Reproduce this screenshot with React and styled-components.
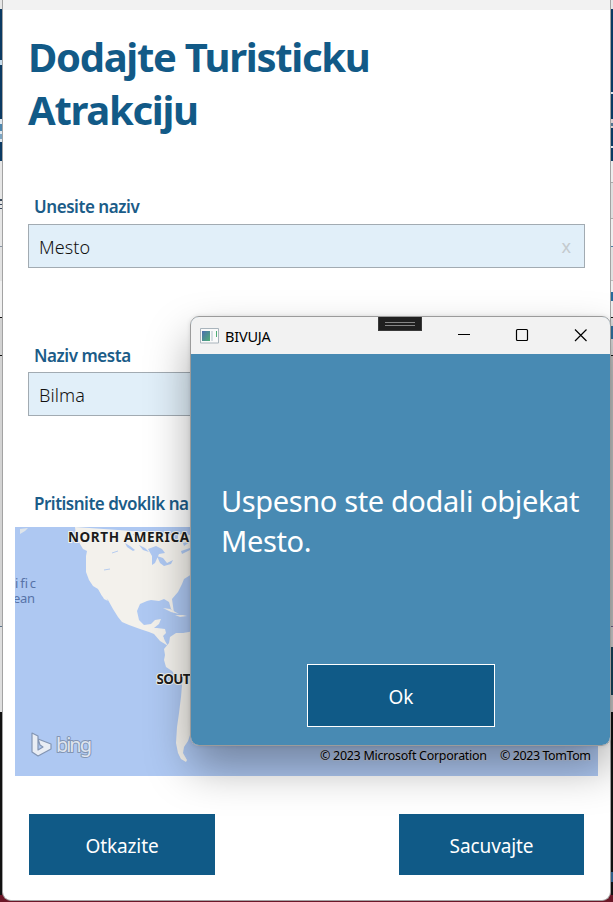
import React from "react";
import styled, { createGlobalStyle } from "styled-components";

const sans = '"Noto Sans", "Open Sans", sans-serif';

const GlobalStyle = createGlobalStyle`
  * { box-sizing: border-box; }
  body { margin: 0; overflow: hidden; background: #6b1727; font-family: ${sans}; }
`;

const Desktop = styled.div`
  position: relative;
  display: grid;
  grid-template-columns: 2px 609px 2px;
  width: 613px;
  height: 902px;
  background: linear-gradient(#e8e8e8 0 890px, #6b1727 890px);
  overflow: hidden;
`;

const Strip = styled.div`
  display: flex;
  flex-direction: column;
`;

const Band = styled.div`
  flex: none;
  height: ${(p) => p.$h}px;
  background: ${(p) => p.$c};
`;

const Window = styled.main`
  height: 901px;
  display: flex;
  flex-direction: column;
  background: #fff;
  border: 1px solid #a3a3a3;
  border-top: 0;
  border-radius: 0 0 9px 9px;
  overflow: hidden;
`;

const WindowTop = styled.div`
  flex: none;
  height: 10px;
  background: #f2f2f2;
`;

const Title = styled.h1`
  margin: 20px 0 0 25px;
  width: 400px;
  color: #125a87;
  font-size: 40px;
  line-height: 53px;
  font-weight: 700;
  letter-spacing: -1.3px;
`;

const Label = styled.label`
  display: block;
  margin: ${(p) => p.$top}px 0 0 31px;
  height: 24px;
  line-height: 24px;
  font-size: 17px;
  font-weight: 600;
  color: #1b5c88;
  letter-spacing: ${(p) => p.$track || -0.45}px;
  white-space: nowrap;
`;

const Field = styled.div`
  flex: none;
  display: flex;
  align-items: center;
  justify-content: space-between;
  margin: ${(p) => p.$top}px 25px 0 25px;
  height: 44px;
  padding: 2px 13px 0 10px;
  background: #e1eff9;
  border: 1px solid #a2abb2;
`;

const Value = styled.span`
  font-size: 18px;
  font-weight: 300;
  color: #111;
  letter-spacing: 0.1px;
`;

const Clear = styled.span`
  font-size: 18px;
  line-height: 20px;
  padding-bottom: 3px;
  color: #c4cace;
`;

const MapArea = styled.div`
  flex: none;
  margin: 11px 0 0 12px;
  width: 583px;
  height: 249px;
  background: #aec8f2;

  svg { display: block; }
`;

const MapText = styled.text`
  font-family: ${sans};
  font-size: ${(p) => p.$size}px;
  font-weight: ${(p) => p.$weight || 400};
  fill: ${(p) => p.$fill || "#1c1c1c"};
  stroke: ${(p) => p.$halo || "none"};
  stroke-width: 2px;
  paint-order: stroke;
`;

const Actions = styled.div`
  display: flex;
  justify-content: space-between;
  margin: 38px 26px 0 26px;
`;

const Button = styled.button`
  width: ${(p) => p.$w}px;
  height: ${(p) => p.$h}px;
  padding: 2px 0 0;
  border: ${(p) => (p.$outlined ? "1px solid #fff" : "0")};
  background: #105a87;
  color: #fff;
  font-family: ${sans};
  font-size: 19px;
  letter-spacing: -0.1px;
`;

const Dialog = styled.section`
  position: absolute;
  left: 190px;
  top: 316px;
  width: 421px;
  height: 430px;
  display: flex;
  flex-direction: column;
  border: 1px solid #9b9b9b;
  border-radius: 9px;
  background: #488ab3;
  background-clip: padding-box;
  overflow: hidden;
`;

const DialogShadow = styled.div`
  position: absolute;
  left: 190px;
  top: 316px;
  width: 421px;
  height: 430px;
  border-radius: 9px;
  box-shadow: 0 22px 44px rgba(0, 0, 0, 0.34), 0 0 4px rgba(0, 0, 0, 0.12);
`;

const TitleBar = styled.header`
  position: relative;
  flex: none;
  height: 37px;
  display: flex;
  align-items: center;
  padding-left: 9px;
  background: #f2f2f2;
`;

const AppName = styled.span`
  margin-left: 6px;
  flex: 1;
  font-size: 14.5px;
  color: #000;
  letter-spacing: -0.2px;
`;

const WindowButtons = styled.div`
  display: flex;

  svg { display: block; }
`;

const Grip = styled.div`
  position: absolute;
  left: 187px;
  top: 0;
  width: 44px;
  height: 14px;
  background: #202020;
  display: flex;
  flex-direction: column;
  align-items: center;
  gap: 2px;
  padding-top: 5px;
  border: 1px solid #3a3a3a;
  border-top: 0;
`;

const GripLine = styled.i`
  width: 30px;
  height: 1px;
  background: #868686;
`;

const Message = styled.p`
  margin: 127px 0 0 30px;
  font-size: 29px;
  line-height: 40px;
  color: #fff;
  white-space: nowrap;
  letter-spacing: -0.38px;
`;

const DialogActions = styled.div`
  display: flex;
  margin: 103px 0 0 116px;
`;

const leftBands = [
  [9, "#e6e6e6"], [51, "#0b3a63"], [5, "#c6dcec"], [54, "#0b3a63"], [5, "#dfe9f1"],
  [7, "#4d86ae"], [3, "#dfe9f1"], [5, "#7ca5c3"], [3, "#dfe9f1"], [19, "#0b3a63"],
  [38, "#e6e6e6"], [2, "#39495c"], [3, "#e6e6e6"], [1, "#39495c"], [3, "#e6e6e6"],
  [1, "#39495c"], [37, "#e6e6e6"], [1, "#8794a3"], [34, "#e2e2e2"], [36, "#f0f0f0"],
  [1, "#111"], [37, "#d2d2d2"], [1, "#111"], [270, "#d3d3d3"], [1, "#5c748b"],
  [85, "#dedede"], [183, "#111"], [7, "#6b1727"],
];

const rightBands = [
  [9, "#e6e6e6"], [83, "#0b3a63"], [2, "#dce6ee"], [25, "#0b3a63"], [4, "#d9cfd0"],
  [3, "#507290"], [2, "#d9cfd0"], [18, "#0b3a63"], [2, "#dce6ee"], [13, "#0b3a63"],
  [21, "#ededed"], [1, "#aaa"], [35, "#dedede"], [1, "#aaa"], [27, "#eee"],
  [1, "#4b7ca2"], [33, "#e0e0e0"], [1, "#bbb"], [11, "#eee"], [9, "#286b9c"],
  [16, "#eee"], [1, "#111"], [8, "#ddd"], [13, "#2f6f9d"], [16, "#ddd"],
  [1, "#111"], [270, "#c9c9c9"], [1, "#71608b"], [20, "#d5d5d5"], [48, "#18455c"],
  [17, "#ccc"], [160, "#111"], [10, "#2e5f8a"], [13, "#111"], [7, "#6b1727"],
];

function Backdrop({ bands }) {
  return (
    <Strip>
      {bands.map(([h, c], i) => (
        <Band key={i} $h={h} $c={c} />
      ))}
    </Strip>
  );
}

function WorldMap() {
  return (
    <svg width="583" height="249" viewBox="15 527 583 249">
      <g fill="#f3f1ec">
        <path d="M75 527l1 8 4 9 3 5 4 2-1 5 0 16 3 8 4 6 5 3 4 7 6 4 5 9 5 8 4 5 7 3 11 4 9 3 5 2 6 7 5 3 3 2-3-5-2-5 3-3-1-4-8-1-3 0 5-4 2-5-6 1-4 4-7 1-5-5-2-9 3-7 7-3 4-1 8 1 5-2 5 3 2 7 3 4-1-7-1-7 6-7 4-8 2-5 8-5 12-5v-33z" />
        <path d="M98 588l4 3 4 7 2 3-4-2z" />
        <path d="M163 608l7 1 9 5-8-2zM175 615l8 0 4 1-7 1z" />
        <path d="M156 632l6 3 2 3-4-2zM200 630l-17 3-7 0-6 4-1 6-5 6 1 6-1 5 2 7 6 4 5 7 5 7-1 12-2 16-2 14-1 16 2 10 3 6 5 3 1-2-4-7 1-6 4-6 4-12 10-10z" />
        <path d="M20 534l5-3 3-3-8 1zM33 530l5-2" fill="#dfe5ea" />
      </g>
      <g fill="#aec8f2">
        <path d="M148 549l8-3 6 3 3 4-6 1-4 9-3 2 0-9zM157 556l6 2 4 5 6-3-2 4-7 2-4-3zM163 527l3 6 6 3 3 7 3-5 0-6-3-5z" />
        <path d="M125 543l5 3 5 4-2 1-6-4zM139 545l6 3 4 4-6-2z" />
        <path d="M183 543l7-2v1l-6 4zM181 551l9-3v2l-8 4z" />
      </g>
      <g stroke="#b7cdef" fill="none">
        <path d="M112 553l6-2M104 570l6-1M133 534l6 5" />
      </g>
      <MapText x="68" y="542" $size={13.5} $weight={700} $halo="#f4f4f0" textLength="121">NORTH AMERICA</MapText>
      <MapText x="156.500" y="684" $size={13.5} $weight={700} $halo="#f4f4f0" textLength="34">SOUT</MapText>
      <MapText x="15" y="588" $size={13} $fill="#5773a8" textLength="21">ific</MapText>
      <MapText x="13" y="603" $size={13} $fill="#5773a8" textLength="22">ean</MapText>
      <g fill="#e9edf4" stroke="#8395b3" strokeWidth="1.200" strokeLinejoin="round">
        <path d="M32 733l6 3v14l5-3-3-2-2-6 13 5v5l-13 7-6-4z" />
        <MapText x="56" y="752" $size={20} $fill="#dfe5ef" $halo="#8395b3" textLength="36">bing</MapText>
      </g>
      <MapText x="320" y="760" $size={12.5} $fill="#000" $halo="#bccae6" textLength="167">© 2023 Microsoft Corporation</MapText>
      <MapText x="500" y="760" $size={12.5} $fill="#000" $halo="#bccae6" textLength="91">© 2023 TomTom</MapText>
    </svg>
  );
}

function AppIcon() {
  return (
    <svg width="19" height="16" viewBox="0 0 19 16">
      <defs>
        <linearGradient id="pane" x1="0" y1="0" x2="1" y2="1">
          <stop offset="0" stopColor="#4a6fb0" />
          <stop offset="1" stopColor="#4fae76" />
        </linearGradient>
      </defs>
      <path d="M.5 .5h18v14.500h-18z" fill="#fafafa" stroke="#a9b4bc" />
      <path d="M2 3h8v10H2z" fill="url(#pane)" />
      <path d="M11 3h2v10h-2z" fill="#d5dde2" />
      <path d="M16 3h1v6h-1z" fill="#4fae76" />
    </svg>
  );
}

export default function App() {
  return (
    <Desktop>
      <GlobalStyle />
      <Backdrop bands={leftBands} />
      <Window>
        <WindowTop />
        <Title>Dodajte Turisticku Atrakciju</Title>
        <Label $top={59}>Unesite naziv</Label>
        <Field $top={5}>
          <Value>Mesto</Value>
          <Clear>x</Clear>
        </Field>
        <Label $top={76}>Naziv mesta</Label>
        <Field $top={4}>
          <Value>Bilma</Value>
        </Field>
        <Label $top={76} $track={-0.5}>Pritisnite dvoklik na</Label>
        <MapArea>
          <WorldMap />
        </MapArea>
        <Actions>
          <Button $w={186} $h={61}>Otkazite</Button>
          <Button $w={185} $h={61}>Sacuvajte</Button>
        </Actions>
      </Window>
      <Backdrop bands={rightBands} />
      <DialogShadow />
      <Dialog>
        <TitleBar>
          <AppIcon />
          <AppName>BIVUJA</AppName>
          <Grip>
            <GripLine />
            <GripLine />
          </Grip>
          <WindowButtons>
            <svg width="159" height="37" viewBox="0 0 159 37" fill="none" stroke="#000" strokeWidth="1.200">
              <path d="M7 17.500h12" />
              <rect x="65.500" y="12.500" width="11" height="11" rx="1" />
              <path d="M124 12.500l11.500 11.500M135.500 12.500L124 24" />
            </svg>
          </WindowButtons>
        </TitleBar>
        <Message>
          Uspesno ste dodali objekat
          <br />
          Mesto.
        </Message>
        <DialogActions>
          <Button $w={188} $h={63} $outlined>Ok</Button>
        </DialogActions>
      </Dialog>
    </Desktop>
  );
}
